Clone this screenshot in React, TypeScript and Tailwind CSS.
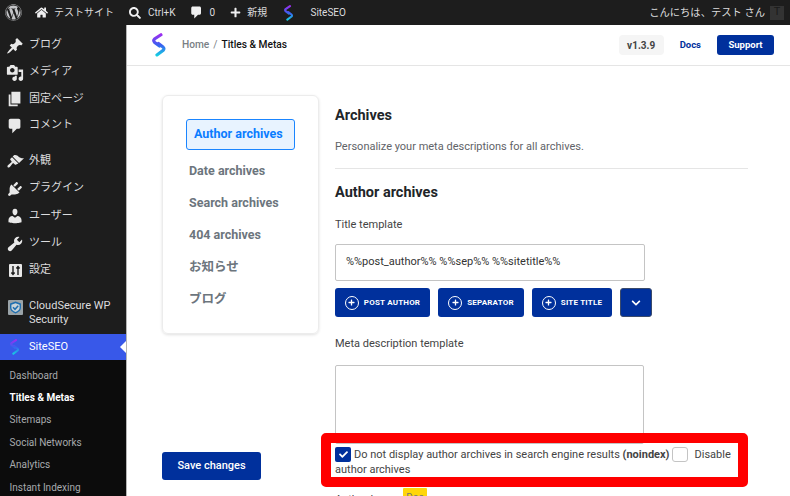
import { useId } from "react";
import { FaWordpress, FaSearch, FaPlus, FaHome, FaChevronDown, FaCheck } from "react-icons/fa";

function Logo({ size = 24 }: { size?: number }) {
  const id = useId();
  return (
    <svg width={size * 0.58} height={size} viewBox="0 0 14 24" fill="none">
      <defs>
        <linearGradient id={id} gradientUnits="userSpaceOnUse" x1="0" y1="0" x2="0" y2="24">
          <stop offset="0" stopColor="#a828f0" />
          <stop offset="0.5" stopColor="#3a60f0" />
          <stop offset="1" stopColor="#10dce0" />
        </linearGradient>
      </defs>
      <path d="M9 1.700 L2.500 6 Q1 7.500 2.500 9.300 L7.500 13" stroke={`url(#${id})`} strokeWidth="3.200" strokeLinecap="round" />
      <path d="M6.500 10.500 L11.300 14.300 Q12.800 15.800 11.300 17.300 L5 22" stroke={`url(#${id})`} strokeWidth="3.200" strokeLinecap="round" />
    </svg>
  );
}

// dashicon style glyph on a 20 unit box
function Glyph({ d, size = 18 }: { d: string; size?: number }) {
  return (
    <svg width={size} height={size} viewBox="0 0 20 20" fill="currentColor">
      <path d={d} />
    </svg>
  );
}

const commentPath = "M5 2h9c1.100 0 2 .9 2 2v7c0 1.100-.9 2-2 2h-2l-5 5v-5H5c-1.100 0-2-.9-2-2V4c0-1.100.9-2 2-2z";

function SettingsIcon() {
  return (
    <svg width="13" height="13" viewBox="0 0 13 13">
      <rect width="13" height="13" rx="1" fill="currentColor" />
      <path d="M4 2v9M2.400 8.500 4 10.500l1.600-2M9 11V2M7.400 4.500 9 2.500l1.600 2" stroke="#1d1d1d" strokeWidth="1.400" fill="none" />
    </svg>
  );
}

function ShieldIcon() {
  return (
    <svg width="15" height="15" viewBox="0 0 15 15">
      <rect width="15" height="15" rx="1" fill="#9aa3a8" />
      <path d="M7.500 1.600 13 3.600v4c0 3-2.600 4.800-5.500 5.800C4.600 12.400 2 10.600 2 7.600v-4z" fill="#1f6fb0" />
      <path d="M7.500 3.200 11.600 4.700v3c0 2.100-1.900 3.500-4.100 4.200-2.200-.7-4.100-2.100-4.100-4.200v-3z" fill="#c9d3d8" />
      <path d="M5 7.300 7 9.300l3.200-3.600" stroke="#1f6fb0" strokeWidth="1.500" fill="none" />
    </svg>
  );
}

const groupA = [
  {
    icon: <Glyph d="M10.440 3.020l1.820-1.820 6.360 6.350-1.830 1.820c-1.050-.68-2.480-.57-3.410.36l-.75.750c-.92.930-1.040 2.350-.35 3.400l-1.830 1.820-2.410-2.410-2.800 2.790c-.42.420-3.380 2.710-3.800 2.290s1.860-3.390 2.280-3.810l2.790-2.790L4.100 9.360l1.830-1.820c1.050.69 2.480.57 3.400-.36l.75-.75c.93-.92 1.050-2.350.36-3.410z" />,
    label: "ブログ",
    cls: "h-[27px]",
  },
  {
    icon: <Glyph d="M13 11V4c0-.55-.45-1-1-1h-1.670L9 1H5L3.670 3H2c-.55 0-1 .45-1 1v7c0 .55.45 1 1 1h10c.55 0 1-.45 1-1zM7 4.500c1.380 0 2.500 1.120 2.500 2.500S8.380 9.500 7 9.500 4.500 8.380 4.500 7 5.620 4.500 7 4.500zM14 6h5v10.500c0 1.380-1.120 2.500-2.500 2.500S14 17.880 14 16.500s1.120-2.500 2.500-2.500c.17 0 .34.020.5.050V9h-3V6zm-4 8.050V13h2v3.500c0 1.380-1.120 2.500-2.500 2.500S7 17.880 7 16.500 8.120 14 9.500 14c.17 0 .34.020.5.050z" />,
    label: "メディア",
    cls: "h-[27px]",
  },
  { icon: <Glyph d="M6 15V2h10v13H6zm-1 1h8v2H3V5h2v11z" />, label: "固定ページ", cls: "h-[26px]" },
  { icon: <Glyph d={commentPath} />, label: "コメント", cls: "h-[27px]" },
];

const groupB = [
  {
    icon: <Glyph d="M14.480 11.060L7.410 3.990l1.500-1.500c.5-.56 2.300-.47 3.510.32 1.210.8 1.430 1.280 2.910 2.100 1.180.64 2.450 1.260 4.670.85zM13.770 11.770L6.700 4.700 4.930 6.470c-.39.39-.39 1.020 0 1.410l1.060 1.060c.39.39.39 1.030 0 1.420-.6.6-1.430 1.150-2.250 1.730-1.050.74-1.720 1.370-2.060 2.200-.19.480-.14 1.060.25 1.450.39.39.97.44 1.450.25.83-.34 1.460-1.010 2.200-2.060.58-.82 1.130-1.650 1.730-2.250.39-.39 1.030-.39 1.420 0l1.060 1.060c.39.39 1.020.39 1.410 0z" />,
    label: "外観",
    cls: "h-[27px]",
  },
  {
    icon: <Glyph d="M13.110 4.360L9.870 7.600 8 5.730l3.240-3.240c.35-.34 1.050-.2 1.560.32.52.51.66 1.210.31 1.550zm-8 1.770l.91-1.120 9.010 9.010-1.190.84c-.71.710-2.630 1.160-3.820 1.160H6.140L4.900 17.260c-.59.590-1.540.59-2.120 0-.59-.58-.59-1.530 0-2.120l1.240-1.240v-3.880c0-1.130.4-3.130 1.090-3.890zm7.260 3.970l3.240-3.240c.34-.35 1.040-.21 1.550.31.520.51.66 1.210.31 1.550l-3.240 3.250z" />,
    label: "プラグイン",
    cls: "h-[27px]",
  },
  {
    icon: <Glyph d="M10 9.250c-2.270 0-2.730-3.440-2.730-3.440C7 4.020 7.820 2 9.970 2c2.160 0 2.980 2.020 2.710 3.810 0 0-.41 3.440-2.680 3.440zm0 2.570L12.720 10c2.390 0 4.520 2.330 4.520 4.530v2.490s-3.650 1.130-7.240 1.130c-3.650 0-7.240-1.130-7.240-1.130v-2.490c0-2.250 1.940-4.480 4.470-4.480z" />,
    label: "ユーザー",
    cls: "h-[28px]",
  },
  {
    icon: <Glyph d="M16.680 9.770c-1.340 1.340-3.300 1.670-4.950.99l-5.410 6.520c-.99.99-2.590.99-3.570 0-.99-.98-.99-2.580 0-3.570l6.520-5.420c-.68-1.650-.35-3.610.99-4.950 1.280-1.280 3.120-1.620 4.720-1.060l-2.890 2.890 2.820 2.820 2.860-2.870c.53 1.580.18 3.390-1.090 4.650z" />,
    label: "ツール",
    cls: "h-[27px]",
  },
  { icon: <SettingsIcon />, label: "設定", cls: "h-[27px]" },
];

const subMenu = ["Dashboard", "Titles & Metas", "Sitemaps", "Social Networks", "Analytics", "Instant Indexing"];
const archiveTabs = ["Date archives", "Search archives", "404 archives", "お知らせ", "ブログ"];

function MenuRow({ icon, label, cls }: { icon: React.ReactNode; label: string; cls: string }) {
  return (
    <div className={`flex shrink-0 items-center ${cls}`}>
      <div className="flex w-[29px] justify-center pl-[1px] text-[#e8e8e8]">{icon}</div>
      <span className="text-[11px] text-[#dcdcde]">{label}</span>
    </div>
  );
}

function TagButton({ label, cls }: { label: string; cls: string }) {
  return (
    <button className={`flex h-[29px] items-center justify-center gap-[5px] rounded-[3px] bg-[#00309c] text-[8px] font-bold tracking-[0.2px] text-white ${cls}`}>
      <span className="flex h-[14px] w-[14px] items-center justify-center rounded-full border-[1.5px] border-white">
        <FaPlus size={7} />
      </span>
      {label}
    </button>
  );
}

export default function App() {
  return (
    <div className="relative h-[496px] w-[790px] overflow-hidden bg-white font-['Roboto','Noto_Sans_CJK_JP',sans-serif]">
      {/* admin bar */}
      <div className="flex h-[25px] items-center bg-[#1d1d1d] text-[10px] text-[#dcdcde]">
        <div className="flex w-[27px] justify-center">
          <FaWordpress size={17} className="text-[#c3c4c7]" />
        </div>
        <div className="ml-[8px] flex items-center gap-[6px]">
          <FaHome size={13} className="text-[#f0f0f1]" />
          <span>テストサイト</span>
        </div>
        <div className="ml-[15px] flex items-center gap-[7px]">
          <FaSearch size={12} className="text-[#f0f0f1]" />
          <span>Ctrl+K</span>
        </div>
        <div className="ml-[13px] flex items-center gap-[6px]">
          <span className="text-[#f0f0f1]">
            <Glyph d={commentPath} size={15} />
          </span>
          <span>0</span>
        </div>
        <div className="ml-[15px] flex items-center gap-[6px]">
          <FaPlus size={11} className="text-[#f0f0f1]" />
          <span>新規</span>
        </div>
        <div className="ml-[17px] flex items-center gap-[17px]">
          <Logo size={16} />
          <span>SiteSEO</span>
        </div>
        <div className="ml-auto flex items-center gap-[5px] pr-[6px]">
          <span className="text-[10.300px]">こんにちは、テスト さん</span>
          <span className="flex h-[14px] w-[14px] items-center justify-center bg-[#333] text-[11px] text-[#1a1a1a]">T</span>
        </div>
      </div>

      <div className="flex h-[471px]">
        {/* sidebar */}
        <aside className="flex w-[127px] shrink-0 flex-col overflow-hidden border-r border-[#b5b5b5] bg-[#1d1d1d] pt-[7px]">
          {groupA.map((m) => (
            <MenuRow key={m.label} {...m} />
          ))}
          <div className="h-[9px] shrink-0" />
          {groupB.map((m) => (
            <MenuRow key={m.label} {...m} />
          ))}
          <div className="flex shrink-0 pt-[15px]">
            <div className="flex w-[29px] justify-center pt-[1px] pl-[1px]">
              <ShieldIcon />
            </div>
            <span className="w-[92px] text-[11px] leading-[14px] text-[#dcdcde]">CloudSecure WP Security</span>
          </div>
          <div className="relative mt-[7px] flex h-[26px] shrink-0 items-center bg-[#3858e9]">
            <div className="flex w-[29px] justify-center">
              <Logo size={16} />
            </div>
            <span className="text-[11px] text-white">SiteSEO</span>
            <span className="absolute right-0 top-[7px] h-0 w-0 border-y-[6px] border-r-[6px] border-y-transparent border-r-white" />
          </div>
          <div className="flex shrink-0 flex-col bg-[#0c0c0c] pl-[9.500px] pt-[4px]">
            {subMenu.map((s) => (
              <div
                key={s}
                className={`flex h-[22.400px] items-center text-[10px] ${s === "Titles & Metas" ? "font-bold text-white" : "text-[#a7aaad]"}`}
              >
                {s}
              </div>
            ))}
          </div>
        </aside>

        {/* main */}
        <main className="flex min-w-0 flex-1 flex-col">
          <header className="flex h-[41px] shrink-0 items-center border-b border-[#e5e5e5] pl-[25px] pr-[16px]">
            <Logo size={24} />
            <span className="ml-[16px] text-[10.200px] font-medium text-[#7a7f85]">Home</span>
            <span className="mx-[4px] text-[10.200px] text-[#7a7f85]">/</span>
            <span className="text-[10.200px] font-medium text-[#111]">Titles &amp; Metas</span>
            <span className="ml-auto flex h-[20px] w-[45px] items-center justify-center rounded-[4px] bg-[#f5f5f5] text-[10px] font-bold text-[#444]">
              v1.3.9
            </span>
            <span className="ml-[16px] text-[9.500px] font-bold text-[#00309c]">Docs</span>
            <span className="ml-[16px] flex h-[20px] w-[57px] items-center justify-center rounded-[3px] bg-[#00309c] text-[9.500px] font-bold text-white">
              Support
            </span>
          </header>

          <div className="flex min-h-0 flex-1 overflow-hidden pl-[35px]">
            <div className="flex w-[157px] shrink-0 flex-col pt-[29px]">
              <div className="h-[239px] shrink-0 rounded-[6px] border border-[#ececec] px-[23px] pt-[23px] shadow-[0_1px_3px_rgba(0,0,0,0.12)]">
                <div className="flex h-[31px] w-[109px] items-center rounded-[3px] border border-[#1a85ff] bg-[#e8f3ff] pl-[7px] text-[12.500px] font-bold text-[#0a7cff]">
                  Author archives
                </div>
                <div className="mt-[5px] flex flex-col">
                  {archiveTabs.map((t) => (
                    <div key={t} className="flex h-[32px] items-center pl-[3px] text-[12.500px] font-bold text-[#6c757d]">
                      {t}
                    </div>
                  ))}
                </div>
              </div>
              <button className="mt-[118px] h-[28px] w-[99px] shrink-0 rounded-[3px] bg-[#00309c] text-[11px] font-medium text-white">
                Save changes
              </button>
            </div>

            <div className="ml-[16px] w-[413px] shrink-0 pt-[41px]">
              <h2 className="text-[14.500px] font-bold leading-[18px] text-[#212529]">Archives</h2>
              <p className="mt-[15px] text-[11px] leading-[14px] text-[#5f6368]">Personalize your meta descriptions for all archives.</p>
              <div className="mt-[14px] h-px bg-[#e5e5e5]" />
              <h3 className="mt-[15px] text-[14.500px] font-bold leading-[18px] text-[#212529]">Author archives</h3>
              <div className="mt-[16px] text-[11px] leading-[14px] text-[#444]">Title template</div>
              <div className="mt-[12px] flex h-[37px] w-[310px] items-center rounded-[2px] border border-[#c4c4c4] pl-[10px] text-[11px] text-[#333]">
                %%post_author%% %%sep%% %%sitetitle%%
              </div>
              <div className="mt-[7px] flex gap-[8px]">
                <TagButton label="POST AUTHOR" cls="w-[95px]" />
                <TagButton label="SEPARATOR" cls="w-[86px]" />
                <TagButton label="SITE TITLE" cls="w-[80px]" />
                <button className="flex h-[29px] w-[32px] items-center justify-center rounded-[3px] border border-[#3a4a6b] bg-[#00309c] text-white">
                  <FaChevronDown size={10} />
                </button>
              </div>
              <div className="mt-[20px] text-[11px] leading-[14px] text-[#444]">Meta description template</div>
              <div className="mt-[14px] h-[79px] w-[309px] rounded-[2px] border border-[#c4c4c4]" />
              <div className="mt-[3px] w-[403px] text-[11px] leading-[15px] text-[#444]">
                <span className="mr-[3px] inline-flex h-[15px] w-[16px] items-center justify-center rounded-[2px] bg-[#00309c] align-top text-white">
                  <FaCheck size={9} />
                </span>
                Do not display author archives in search engine results <b className="font-bold">(noindex)</b>
                <span className="ml-[3px] mr-[6px] inline-block h-[15px] w-[16px] rounded-[3px] border border-[#c4c4c4] align-top" />
                Disable author archives
              </div>
              <div className="mt-[11px] flex items-start gap-[11px] text-[11px] text-[#444]">
                <span className="pt-[4px]">Author logo</span>
                <span className="flex h-[18px] w-[24px] items-center justify-center rounded-[1px] bg-[#ffd60a] text-[10px] text-[#777]">Doc</span>
              </div>
            </div>
          </div>
        </main>
      </div>

      {/* red annotation over the checkbox row */}
      <div className="pointer-events-none absolute left-[321px] top-[433px] h-[54px] w-[427px] rounded-[5px] border-[10px] border-[#ff0000]" />
    </div>
  );
}
